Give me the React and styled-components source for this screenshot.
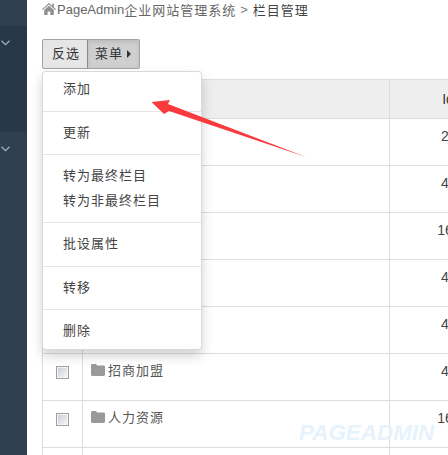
import React from "react";
import styled, { createGlobalStyle } from "styled-components";

const Global = createGlobalStyle`
  html, body { margin: 0; padding: 0; background: #fff; }
  body { font-family: "Liberation Sans", "Noto Sans CJK SC", sans-serif; color: #333; }
`;

const Page = styled.div`
  position: relative;
  display: flex;
  width: 448px;
  height: 455px;
  overflow: hidden;
`;

const Sidebar = styled.aside`
  flex: none;
  width: 27px;
  display: flex;
  flex-direction: column;
  background: #2f4051;
`;

const SideGroup = styled.div`
  flex: ${p => (p.$grow ? "1" : "none")};
  height: ${p => (p.$h ? `${p.$h}px` : "auto")};
  background: ${p => (p.$dark ? "#293848" : "#2f4051")};
  padding: 14px 0 0 1px;
  box-sizing: border-box;
  & svg { display: block; }
`;

const SideTop = styled.div`
  flex: none;
  height: 26px;
`;

const Main = styled.main`
  flex: 1;
  min-width: 0;
  padding-left: 15px;
  overflow: hidden;
`;

const Breadcrumb = styled.div`
  display: flex;
  align-items: center;
  height: 18px;
  font-size: 13px;
  letter-spacing: 1px;
  color: #666;
  white-space: nowrap;
`;

const HomeIcon = styled.svg`
  flex: none;
  width: 14px;
  height: 12px;
  margin-right: 1px;
  fill: #8f8f8f;
`;

const Latin = styled.span`
  letter-spacing: 0;
`;

const Sep = styled.span`
  margin: 0 5px 0 4px;
  letter-spacing: 0;
  color: #777;
`;

const Current = styled.span`
  color: #444;
`;

const Toolbar = styled.div`
  position: relative;
  display: flex;
  margin-top: 21px;
  height: 30px;
`;

const ToolButton = styled.button`
  display: flex;
  align-items: center;
  justify-content: flex-start;
  box-sizing: border-box;
  height: 30px;
  width: ${p => p.$w}px;
  margin: 0;
  padding: 0 0 4px ${p => p.$pl}px;
  border: 1px solid #a3a3a3;
  border-left-color: ${p => (p.$active ? "#8c8c8c" : "#a3a3a3")};
  margin-left: ${p => (p.$active ? "-1px" : "0")};
  border-radius: ${p => (p.$active ? "0 2px 2px 0" : "2px 0 0 2px")};
  background: ${p => (p.$active ? "#cfcfcf" : "#e6e6e6")};
  box-shadow: ${p => (p.$active ? "inset 0 2px 4px rgba(0,0,0,.1)" : "none")};
  font: 13px "Liberation Sans", "Noto Sans CJK SC", sans-serif;
  letter-spacing: 1px;
  color: #333;
`;

const Caret = styled.span`
  margin: 3px 0 0 4px;
  width: 0;
  height: 0;
  border-left: 4px solid #333;
  border-top: 4px solid transparent;
  border-bottom: 4px solid transparent;
`;

const Menu = styled.ul`
  position: absolute;
  z-index: 5;
  top: 32px;
  left: 0;
  box-sizing: border-box;
  width: 160px;
  margin: 0;
  padding: 5px 0;
  list-style: none;
  background: #fff;
  border: 1px solid rgba(0, 0, 0, 0.15);
  border-radius: 4px;
  box-shadow: 0 6px 12px rgba(0, 0, 0, 0.175);
`;

const MenuItem = styled.li`
  padding: 3px 0 3px 20px;
  line-height: 1.42857;
  font-size: 13px;
  letter-spacing: 1px;
  color: #444;
`;

const MenuDivider = styled.li`
  height: 1px;
  margin: 9px 0;
  background: #e5e5e5;
`;

const Table = styled.table`
  table-layout: fixed;
  width: 459px;
  margin-top: 10px;
  border-collapse: collapse;
  font-size: 14px;
  color: #444;
`;

const HeadCell = styled.th`
  height: 38px;
  padding: 0 0 0 ${p => p.$pl || 0}px;
  border: 1px solid #ddd;
  background: #eee;
  font-weight: normal;
  color: #333;
  text-align: center;
`;

const Cell = styled.td`
  box-sizing: border-box;
  height: 47px;
  padding: ${p => (p.$name ? "8px 0 0 8px" : "8px 0 0")};
  border: 1px solid #ddd;
  vertical-align: top;
  text-align: ${p => (p.$name ? "left" : "center")};
  line-height: 18px;
`;

const Check = styled.input.attrs({ type: "checkbox" })`
  appearance: none;
  display: block;
  box-sizing: border-box;
  width: 13px;
  height: 13px;
  margin: 4px 0 0 13px;
  border: 1px solid #a0a0a0;
  box-shadow: inset 0 0 0 1px #f4f4f4;
  background: linear-gradient(135deg, #c8ced4, #f7f8f9);
`;

const Name = styled.div`
  display: flex;
  align-items: center;
  font-size: 13px;
  letter-spacing: 1px;
  color: #555;
`;

const FolderIcon = styled.svg`
  flex: none;
  width: 14px;
  height: 12px;
  margin: -2px 3px 0 0;
  fill: #999;
`;

const Arrow = styled.svg`
  position: absolute;
  z-index: 6;
  left: 0;
  top: 0;
  width: 448px;
  height: 455px;
  pointer-events: none;
`;

const Watermark = styled.div`
  position: absolute;
  z-index: 7;
  left: 299px;
  top: 420px;
  font-size: 22.4px;
  line-height: 25px;
  font-weight: bold;
  font-style: italic;
  color: #e6f3fd;
  white-space: nowrap;
`;

const rows = [
  { id: 2 },
  { id: 4 },
  { id: 16 },
  { id: 4 },
  { id: 4 },
  { id: 4, name: "招商加盟" },
  { id: 16, name: "人力资源" },
  {},
];

const menu = [
  ["添加"],
  ["更新"],
  ["转为最终栏目", "转为非最终栏目"],
  ["批设属性"],
  ["转移"],
  ["删除"],
];

const Chevron = () => (
  <svg width="9" height="6" viewBox="0 0 9 6" fill="none" stroke="#9fb2c6" strokeWidth="1.2">
    <path d="M.5 .8 4.500 4.600 8.500 .8" />
  </svg>
);

export default function App() {
  return (
    <>
      <Global />
      <Page>
        <Sidebar>
          <SideTop />
          <SideGroup $h={106} $dark><Chevron /></SideGroup>
          <SideGroup $grow><Chevron /></SideGroup>
        </Sidebar>
        <Main>
          <Breadcrumb>
            <HomeIcon viewBox="0 0 14 12">
              <path d="M7 0 0 6.200l.8.8L7 1.600 13.200 7l.8-.8-2.200-1.900V.8h-1.700v2L7 0Z" />
              <path d="M2.200 7 7 2.800 11.800 7v5H8.400V8.500H5.600V12H2.200Z" />
            </HomeIcon>
            <Latin>PageAdmin</Latin>企业网站管理系统
            <Sep>&gt;</Sep>
            <Current>栏目管理</Current>
          </Breadcrumb>
          <Toolbar>
            <ToolButton $w={46} $pl={9}>反选</ToolButton>
            <ToolButton $w={53} $pl={7} $active>菜单<Caret /></ToolButton>
            <Menu>
              {menu.map((group, i) => (
                <React.Fragment key={group[0]}>
                  {i > 0 && <MenuDivider />}
                  {group.map(label => <MenuItem key={label}>{label}</MenuItem>)}
                </React.Fragment>
              ))}
            </Menu>
          </Toolbar>
          <Table>
            <colgroup>
              <col width="40" />
              <col width="307" />
              <col />
            </colgroup>
            <thead>
              <tr>
                <HeadCell />
                <HeadCell />
                <HeadCell $pl={6}>Id</HeadCell>
              </tr>
            </thead>
            <tbody>
              {rows.map((row, i) => (
                <tr key={i}>
                  <Cell>{row.id && <Check />}</Cell>
                  <Cell $name>
                    {row.name && (
                      <Name>
                        <FolderIcon viewBox="0 0 14 12">
                          <path d="M0 1.500C0 .7.6 0 1.400 0h3.400l1.400 1.600h6.400c.8 0 1.400.6 1.400 1.400v7.500c0 .8-.6 1.500-1.400 1.500H1.400C.6 12 0 11.300 0 10.500Z" />
                        </FolderIcon>
                        {row.name}
                      </Name>
                    )}
                  </Cell>
                  <Cell>{row.id}</Cell>
                </tr>
              ))}
            </tbody>
          </Table>
        </Main>
        <Arrow viewBox="0 0 448 455">
          <path d="M151.500 102 170 100 168 104 306 157 169 111 164 114Z" fill="#fb3a3e" />
        </Arrow>
        <Watermark>PAGEADMIN</Watermark>
      </Page>
    </>
  );
}
